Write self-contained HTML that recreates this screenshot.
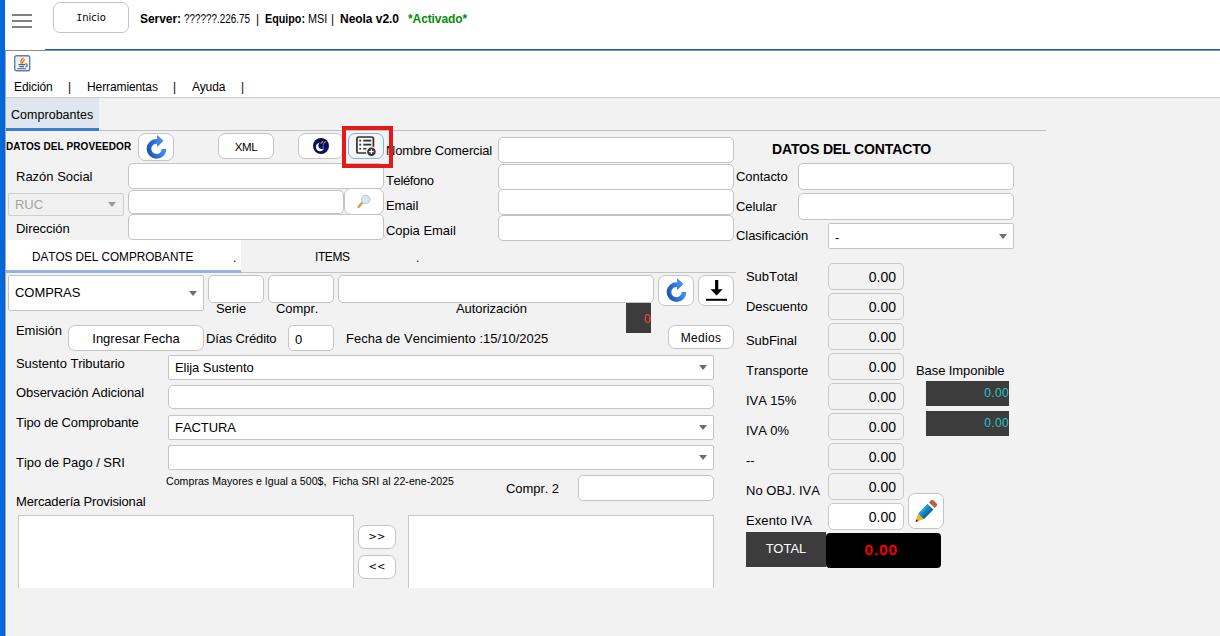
<!DOCTYPE html>
<html lang="es">
<head>
<meta charset="utf-8">
<title>Neola v2.0</title>
<style>
*{box-sizing:border-box;margin:0;padding:0}
html,body{width:1220px;height:636px;overflow:hidden;background:#f2f2f2}
body{position:relative;font-family:"Liberation Sans",sans-serif;font-size:13px;color:#000}
#root>*{position:absolute;white-space:nowrap}
.bar{left:0;top:0;width:5px;height:636px;background:#0068dc}
.top{left:5px;top:0;width:1215px;height:97px;background:#fff}
.fld{background:#fff;border:1px solid #c4c4c4;border-radius:5px}
.btn{background:#fff;border:1px solid #c4c4c4;border-radius:7px;text-align:center}
.sel{background:#fff;border:1px solid #c4c4c4;border-radius:2px}
.num{background:#f2f2f2;border:1px solid #c9c9c9;border-radius:5px;font-family:"Liberation Sans",sans-serif;font-size:14px;text-align:right;padding-right:7px;line-height:26px;width:76px;height:26.500px;left:828px}
.lbl{font-size:13px;line-height:16px;height:17px;padding-top:1px;letter-spacing:-0.06px;font-kerning:none;transform:scaleY(1.05);transform-origin:0 78%}
.t12{padding-top:0}
.arr{width:0;height:0;border-left:4.500px solid transparent;border-right:4.500px solid transparent;border-top:5px solid #6e6e6e;margin-left:0.500px}
</style>
</head>
<body>
<div id="root">
<div class="top"></div>
<div class="bar"></div>
<div style="left:5px;top:50px;width:1px;height:586px;background:#aaa7a3"></div>
<!-- header -->
<div style="left:12px;top:13.5px;width:20px;height:2px;background:#808080"></div>
<div style="left:12px;top:20px;width:20px;height:2px;background:#808080"></div>
<div style="left:12px;top:26px;width:20px;height:2px;background:#808080"></div>
<div class="btn" style="left:53px;top:2px;width:76px;height:31px;border-radius:7px;font-family:'DejaVu Sans',sans-serif;font-size:10px;line-height:29px"><span style="font-family:'Liberation Mono',monospace">I</span>nicio</div>
<div id="hdr" style="left:0;top:11px;width:600px;height:16px;font-size:12px;line-height:16px">
<b style="position:absolute;left:140px;letter-spacing:-0.05px">Server:</b><span style="position:absolute;left:184px;transform:scaleX(0.825);transform-origin:0 0">??????.226.75</span><span style="position:absolute;left:256px">|</span><b style="position:absolute;left:265px;transform:scaleX(0.896);transform-origin:0 0">Equipo:</b><span style="position:absolute;left:308px;transform:scaleX(0.9);transform-origin:0 0">MSI</span><span style="position:absolute;left:331px">|</span><b style="position:absolute;left:340px;letter-spacing:-0.04px">Neola v2.0</b><b style="position:absolute;left:408px;color:#0a8a0a;letter-spacing:-0.1px">*Activado*</b></div>
<div style="left:5px;top:50px;width:1215px;height:1px;background:#8c8c8c"></div>
<div style="left:45px;top:49px;width:1175px;height:1px;background:#0b62d6"></div>
<!-- java icon -->
<svg style="left:14px;top:55px" width="17" height="17" viewBox="0 0 17 17"><rect x="0.700" y="0.700" width="15" height="15" rx="1.800" fill="#f1f1f1" stroke="#5f82a6" stroke-width="1.400"/><path d="M9.600 3 C7 4.800 6.300 6.800 7.400 8.800 M10.800 4.600 C8.900 6 8.200 7.300 8.600 8.600" stroke="#e8781c" fill="none" stroke-width="1.300"/><path d="M4.400 9.600h6.600M5.400 11.600h4.600M3.400 13.700h8.600" stroke="#44678f" stroke-width="1.100"/><path d="M11.400 8.900c2.400 0 2.400 3 0 3" stroke="#44678f" fill="none" stroke-width="1.100"/></svg>
<div id="menu" style="left:0;top:79px;width:400px;height:16px;font-size:12px;line-height:16px;letter-spacing:-0.1px">
<span style="position:absolute;left:14px">Edición</span><span style="position:absolute;left:68px">|</span><span style="position:absolute;left:87px">Herramientas</span><span style="position:absolute;left:173px">|</span><span style="position:absolute;left:192px">Ayuda</span><span style="position:absolute;left:241px">|</span></div>
<div style="left:6px;top:97px;width:1214px;height:1px;background:#cbcbcb"></div>
<!-- main tab -->
<div style="left:6px;top:98px;width:93px;height:30px;background:#dfe6ee"></div>
<div style="left:6px;top:128px;width:93px;height:3px;background:#3c7fd0"></div>
<div style="left:99px;top:130px;width:947px;height:1px;background:#bfbfbf"></div>
<div class="lbl" style="left:11px;top:106px;font-size:12.5px;letter-spacing:0.03px">Comprobantes</div>

<!-- proveedor -->
<div style="left:6px;top:141px;font-size:10px;font-weight:bold;line-height:12px;letter-spacing:0.1px" id="dprov">DATOS DEL PROVEEDOR</div>
<div class="btn" style="left:138px;top:133px;width:36px;height:28px"></div>
<svg style="left:138px;top:133px" width="36" height="28" viewBox="0 0 36 28"><defs><linearGradient id="g1" gradientUnits="userSpaceOnUse" x1="8.5" y1="19.9" x2="28.5" y2="12.9"><stop offset="0" stop-color="#1a4fae"/><stop offset="0.55" stop-color="#2f78dc"/><stop offset="1" stop-color="#4d9af8"/></linearGradient></defs><path d="M28.40 15.90 A9.9 9.9 0 1 1 19.30 6.03 L19.30 10.76 A5.2 5.2 0 1 0 23.70 15.90 Z" fill="url(#g1)"/><path d="M19.10 2.10 L25.60 7.80 L19.10 14.10 Z" fill="url(#g1)"/></svg>
<div class="btn" style="left:218px;top:133px;width:56px;height:26px;font-size:11.500px;line-height:26px;letter-spacing:-0.3px">XML</div>
<div class="btn" style="left:298px;top:133px;width:45px;height:26px"></div>
<svg style="left:313px;top:138px" width="16" height="16" viewBox="0 0 16 16"><circle cx="8" cy="8" r="8" fill="#0b0f5a"/><circle cx="7" cy="9" r="4.200" fill="#fff"/><circle cx="8.900" cy="7.400" r="3.500" fill="#0b0f5a"/><path d="M10.200 7.400 V11.400" stroke="#1b6fd6" stroke-width="1.300"/><path d="M7.800 5.600 L10 3.400" stroke="#f08a1c" stroke-width="1.300"/><path d="M10.700 5.300 L12.500 3.400" stroke="#6fbf3a" stroke-width="1.200"/><path d="M9.800 7 L10.800 6.200" stroke="#e03030" stroke-width="1.200"/></svg>
<div class="btn" style="left:348px;top:133px;width:36px;height:26px;border-color:#86b2e2;background:#f6f6f6"></div>
<svg style="left:348px;top:133px" width="36" height="26" viewBox="0 0 36 26"><rect x="8.900" y="4" width="16.500" height="16" rx="1.800" fill="none" stroke="#333" stroke-width="1.700"/><path d="M11.300 7.600h1.800M15.300 7.600h8M11.300 11.600h1.800M15.300 11.600h8M11.300 15.700h1.800M15.300 15.700h3.200" stroke="#333" stroke-width="1.600"/><circle cx="23.400" cy="18.700" r="4.900" fill="#333" stroke="#f5f5f5" stroke-width="1.200"/><path d="M23.400 16.300v4.800M21 18.700h4.800" stroke="#fff" stroke-width="1.300"/></svg>

<div class="lbl" style="left:16px;top:168px;letter-spacing:-0.01px">Razón Social</div>
<div class="fld" style="left:128px;top:163px;width:256px;height:26px"></div>
<div class="sel" style="left:8px;top:193px;width:116px;height:23px;background:#f0f0f0;border-color:#cfcfcf"></div>
<div class="lbl" style="left:15px;top:196px;color:#a3a3a3">RUC</div>
<div class="arr" style="left:107px;top:202px;border-top-color:#9a9a9a"></div>
<div class="fld" style="left:128px;top:190px;width:216px;height:24px"></div>
<div class="btn" style="left:344px;top:188px;width:40px;height:27px"></div>
<svg style="left:355px;top:193px" width="18" height="18" viewBox="0 0 18 18"><path d="M3.600 13.800 L7.400 9.700" stroke="#d9a35a" stroke-width="2.600" stroke-linecap="round"/><circle cx="10.700" cy="6.500" r="4.200" fill="#d3e9f8" stroke="#b7c6d4" stroke-width="1.100"/></svg>
<div class="lbl" style="left:16px;top:220px">Dirección</div>
<div class="fld" style="left:128px;top:214px;width:256px;height:26px"></div>

<div class="lbl" style="left:386px;top:142px;letter-spacing:-0.15px">Nombre Comercial</div>
<div class="lbl" style="left:386px;top:172px;letter-spacing:-0.36px">Teléfono</div>
<div class="lbl" style="left:386px;top:197px">Email</div>
<div class="lbl" style="left:386px;top:222px;letter-spacing:-0.03px">Copia Email</div>
<div class="fld" style="left:498px;top:137px;width:236px;height:26px"></div>
<div class="fld" style="left:498px;top:164px;width:236px;height:26px"></div>
<div class="fld" style="left:498px;top:189px;width:236px;height:26px"></div>
<div class="fld" style="left:498px;top:215px;width:236px;height:26px"></div>

<!-- contacto -->
<div style="left:772px;top:141px;font-size:14px;font-weight:bold;line-height:16px;letter-spacing:-0.12px" id="dcont">DATOS DEL CONTACTO</div>
<div class="lbl" style="left:736px;top:168px">Contacto</div>
<div class="lbl" style="left:736px;top:198px">Celular</div>
<div class="lbl" style="left:736px;top:227px">Clasificación</div>
<div class="fld" style="left:798px;top:163px;width:216px;height:27px"></div>
<div class="fld" style="left:798px;top:193px;width:216px;height:27px"></div>
<div class="sel" style="left:828px;top:223px;width:186px;height:26px"></div>
<div class="lbl" style="left:835px;top:229px">-</div>
<div class="arr" style="left:998px;top:234px"></div>

<!-- inner tabs -->
<div style="left:6px;top:240px;width:235px;height:30px;background:#fff"></div>
<div style="left:6px;top:270px;width:235px;height:3px;background:#94b6de"></div>
<div style="left:241px;top:272px;width:495px;height:1px;background:#c3c3c3"></div>
<div class="lbl t12" style="left:32px;top:249px;font-size:11.8px" id="tab1">DATOS DEL COMPROBANTE</div>
<div class="lbl t12" style="left:233px;top:250px;font-size:12px">.</div>
<div class="lbl t12" style="left:315px;top:249px;font-size:12px;letter-spacing:-0.4px">ITEMS</div>
<div class="lbl t12" style="left:416px;top:250px;font-size:12px">.</div>

<!-- comprobante -->
<div class="sel" style="left:8px;top:275px;width:196px;height:36px"></div>
<div class="lbl" style="left:15px;top:284px">COMPRAS</div>
<div class="arr" style="left:188px;top:291px"></div>
<div class="fld" style="left:208px;top:275px;width:56px;height:28px"></div>
<div class="fld" style="left:268px;top:275px;width:66px;height:28px"></div>
<div class="fld" style="left:338px;top:275px;width:316px;height:28px"></div>
<div class="lbl" style="left:216px;top:300px">Serie</div>
<div class="lbl" style="left:276px;top:300px">Compr.</div>
<div class="lbl" style="left:456px;top:300px">Autorización</div>
<div class="btn" style="left:658px;top:275px;width:36px;height:31px"></div>
<svg style="left:658px;top:275px" width="36" height="31" viewBox="0 0 36 31"><defs><linearGradient id="g2" gradientUnits="userSpaceOnUse" x1="8.5" y1="21.1" x2="28.5" y2="14.1"><stop offset="0" stop-color="#1a4fae"/><stop offset="0.55" stop-color="#2f78dc"/><stop offset="1" stop-color="#4d9af8"/></linearGradient></defs><path d="M28.40 17.10 A9.9 9.9 0 1 1 19.30 7.23 L19.30 11.96 A5.2 5.2 0 1 0 23.70 17.10 Z" fill="url(#g2)"/><path d="M19.10 3.30 L25.60 9.00 L19.10 15.30 Z" fill="url(#g2)"/></svg>
<div class="btn" style="left:698px;top:275px;width:36px;height:31px"></div>
<svg style="left:698px;top:275px" width="36" height="31" viewBox="0 0 36 31"><path d="M17.100 5h3.200v9.300h4.400l-6.100 6.200l-6.100-6.200h4.600z" fill="#000"/><rect x="8" y="23.800" width="21" height="2" fill="#000"/></svg>
<div style="left:626px;top:303px;width:25px;height:30px;background:#3c3c3c"></div>
<div class="lbl" style="left:644px;top:310px;color:#ff4545;font-size:12px">0</div>

<div class="lbl" style="left:16px;top:322px">Emisión</div>
<div class="btn" style="left:68px;top:325px;width:136px;height:26px;font-size:13px;line-height:25px">Ingresar Fecha</div>
<div class="lbl" style="left:206px;top:330px;letter-spacing:-0.15px">Días Crédito</div>
<div class="fld" style="left:288px;top:325px;width:46px;height:26px"></div>
<div class="lbl" style="left:295px;top:331px">0</div>
<div class="lbl" style="left:346px;top:330px;letter-spacing:0.02px" id="fven">Fecha de Vencimiento :15/10/2025</div>
<div class="btn" style="left:668px;top:325px;width:66px;height:24px;font-size:12px;line-height:24px;letter-spacing:0.3px">Medios</div>

<div class="lbl" style="left:16px;top:355px">Sustento Tributario</div>
<div class="sel" style="left:168px;top:355px;width:546px;height:25px"></div>
<div class="lbl" style="left:175px;top:359px">Elija Sustento</div>
<div class="arr" style="left:698px;top:365px"></div>
<div class="lbl" style="left:16px;top:384px">Observación Adicional</div>
<div class="fld" style="left:168px;top:385px;width:546px;height:24px"></div>
<div class="lbl" style="left:16px;top:414px;letter-spacing:-0.17px">Tipo de Comprobante</div>
<div class="sel" style="left:168px;top:415px;width:546px;height:25px"></div>
<div class="lbl" style="left:175px;top:419px">FACTURA</div>
<div class="arr" style="left:698px;top:425px"></div>
<div class="lbl" style="left:16px;top:454px">Tipo de Pago / SRI</div>
<div class="sel" style="left:168px;top:445px;width:546px;height:25px"></div>
<div class="arr" style="left:698px;top:455px"></div>
<div class="lbl" style="left:166px;top:473px;font-size:10.6px;line-height:14px;letter-spacing:0.03px" id="small">Compras Mayores e Igual a 500$,&nbsp; Ficha SRI al 22-ene-2025</div>
<div class="lbl" style="left:506px;top:480px">Compr. 2</div>
<div class="fld" style="left:578px;top:475px;width:136px;height:26px"></div>
<div class="lbl" style="left:16px;top:493px;letter-spacing:-0.16px">Mercadería Provisional</div>
<div style="left:18px;top:515px;width:336px;height:73px;background:#fff;border:1px solid #c6c6c6;border-bottom:none"></div>
<div style="left:408px;top:515px;width:306px;height:73px;background:#fff;border:1px solid #c6c6c6;border-bottom:none"></div>
<div class="btn" style="left:358px;top:525px;width:38px;height:24px;font-size:12px;line-height:22px;font-family:'DejaVu Sans',sans-serif;font-size:10px">&gt;&gt;</div>
<div class="btn" style="left:358px;top:555px;width:38px;height:24px;font-size:12px;line-height:22px;font-family:'DejaVu Sans',sans-serif;font-size:10px">&lt;&lt;</div>

<!-- totals -->
<div class="lbl" style="left:746px;top:268px">SubTotal</div>
<div class="lbl" style="left:746px;top:298px">Descuento</div>
<div class="lbl" style="left:746px;top:332px">SubFinal</div>
<div class="lbl" style="left:746px;top:362px">Transporte</div>
<div class="lbl" style="left:746px;top:392px">IVA 15%</div>
<div class="lbl" style="left:746px;top:422px">IVA 0%</div>
<div class="lbl" style="left:746px;top:452px">--</div>
<div class="lbl" style="left:746px;top:482px;letter-spacing:0.03px">No OBJ. IVA</div>
<div class="lbl" style="left:746px;top:512px;letter-spacing:0.1px">Exento IVA</div>
<div class="num" style="top:263px">0.00</div>
<div class="num" style="top:293px">0.00</div>
<div class="num" style="top:323px">0.00</div>
<div class="num" style="top:353px">0.00</div>
<div class="num" style="top:383px">0.00</div>
<div class="num" style="top:413px">0.00</div>
<div class="num" style="top:443px">0.00</div>
<div class="num" style="top:473px">0.00</div>
<div class="num" style="top:503px;background:#fff">0.00</div>
<div class="lbl" style="left:916px;top:362px;letter-spacing:-0.08px">Base Imponible</div>
<div style="left:926px;top:381px;width:83px;height:25px;background:#3c3c3c;color:#2ec4c4;font-size:12px;line-height:25px;text-align:right;padding-right:0;letter-spacing:0.35px">0.00</div>
<div style="left:926px;top:411px;width:83px;height:25px;background:#3c3c3c;color:#2ec4c4;font-size:12px;line-height:25px;text-align:right;padding-right:0;letter-spacing:0.35px">0.00</div>
<div class="btn" style="left:908px;top:493px;width:36px;height:36px"></div>
<svg style="left:908px;top:493px" width="36" height="36" viewBox="0 0 36 36"><g transform="translate(7.500 29) rotate(-45.700)"><path d="M0 0L8 -4V4Z" fill="#f6b21b"/><path d="M0 0L2.600 -1.300V1.300Z" fill="#1a1a4a"/><rect x="8" y="-4" width="13.500" height="8" fill="#1e9ad6"/><rect x="8" y="-1.300" width="13.500" height="2.600" fill="#1682b8"/><rect x="8" y="1.300" width="13.500" height="2.700" fill="#156a96"/><rect x="21.500" y="-4" width="2" height="8" fill="#f4f4f4"/><path d="M23.500 -4h2.500a2 2 0 0 1 2 2v4a2 2 0 0 1 -2 2h-2.500z" fill="#b5623f"/></g></svg>
<div style="left:746px;top:532px;width:80px;height:35px;background:#3c3c3c;color:#fff;font-size:13px;line-height:34px;text-align:center">TOTAL</div>
<div style="left:826px;top:532.500px;width:114.500px;height:35px;background:#000;border-radius:4px;color:#ff0000;font-family:'DejaVu Sans',sans-serif;font-weight:normal;-webkit-text-stroke:0.55px #f00;font-size:13.500px;letter-spacing:0.9px;line-height:35px;text-align:center;padding-right:4px">0.00</div>
<div style="left:342px;top:126px;width:51px;height:41.500px;border:4px solid #e61919"></div>
</div>
</body>
</html>
